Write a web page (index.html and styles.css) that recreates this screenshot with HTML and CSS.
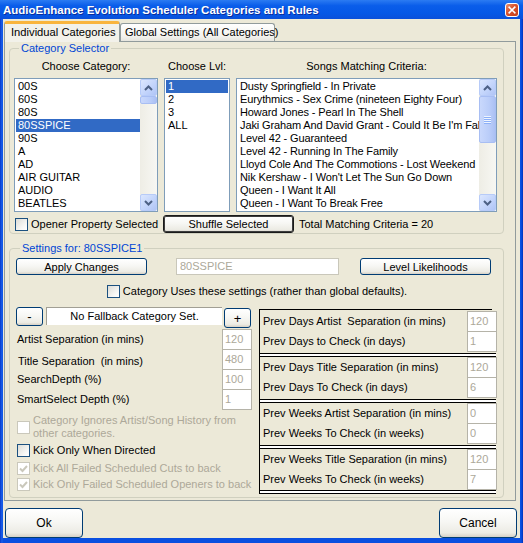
FILE: index.html
```html
<!DOCTYPE html>
<html>
<head>
<meta charset="utf-8">
<title>AudioEnhance Evolution Scheduler Categories and Rules</title>
<link rel="stylesheet" href="styles.css">
</head>
<body>
<div class="window">
  <div class="titlebar">
    <span class="title">AudioEnhance Evolution Scheduler Categories and Rules</span>
    <span class="close"><svg width="10" height="10" viewBox="0 0 10 10"><path d="M1.5 1.5 L8.5 8.5 M8.5 1.5 L1.5 8.5" stroke="#fff" stroke-width="2" stroke-linecap="square"/></svg></span>
  </div>
  <div class="client">
    <div class="tabs">
      <div class="tab active">Individual Categories</div>
      <div class="tab">Global Settings (All Categories)</div>
    </div>
    <div class="panel">
      <fieldset class="group selector">
        <legend>Category Selector</legend>
        <div class="lists">
          <div class="col col-cat">
            <div class="collabel">Choose Category:</div>
            <div class="listbox">
              <div class="items">
                <div class="item">00S</div>
                <div class="item">60S</div>
                <div class="item">80S</div>
                <div class="item sel">80SSPICE</div>
                <div class="item">90S</div>
                <div class="item">A</div>
                <div class="item">AD</div>
                <div class="item">AIR GUITAR</div>
                <div class="item">AUDIO</div>
                <div class="item">BEATLES</div>
              </div>
              <div class="vscroll">
                <div class="sbtn"><svg width="9" height="6" viewBox="0 0 9 6"><path d="M1 5 L4.5 1.5 L8 5" fill="none" stroke="#4D6185" stroke-width="2"/></svg></div>
                <div class="track"><div class="thumb small"></div></div>
                <div class="sbtn"><svg width="9" height="6" viewBox="0 0 9 6"><path d="M1 1 L4.5 4.5 L8 1" fill="none" stroke="#4D6185" stroke-width="2"/></svg></div>
              </div>
            </div>
          </div>
          <div class="col col-lvl">
            <div class="collabel">Choose Lvl:</div>
            <div class="listbox">
              <div class="items">
                <div class="item sel">1</div>
                <div class="item">2</div>
                <div class="item">3</div>
                <div class="item">ALL</div>
              </div>
            </div>
          </div>
          <div class="col col-songs">
            <div class="collabel">Songs Matching Criteria:</div>
            <div class="listbox">
              <div class="items songs">
                <div class="item">Dusty Springfield - In Private</div>
                <div class="item">Eurythmics - Sex Crime (nineteen Eighty Four)</div>
                <div class="item">Howard Jones - Pearl In The Shell</div>
                <div class="item">Jaki Graham And David Grant - Could It Be I'm Fall</div>
                <div class="item">Level 42 - Guaranteed</div>
                <div class="item">Level 42 - Running In The Family</div>
                <div class="item">Lloyd Cole And The Commotions - Lost Weekend</div>
                <div class="item">Nik Kershaw - I Won't Let The Sun Go Down</div>
                <div class="item">Queen - I Want It All</div>
                <div class="item">Queen - I Want To Break Free</div>
              </div>
              <div class="vscroll">
                <div class="sbtn"><svg width="9" height="6" viewBox="0 0 9 6"><path d="M1 5 L4.5 1.5 L8 5" fill="none" stroke="#4D6185" stroke-width="2"/></svg></div>
                <div class="track"><div class="thumb big"><span class="grip"></span></div></div>
                <div class="sbtn"><svg width="9" height="6" viewBox="0 0 9 6"><path d="M1 1 L4.5 4.5 L8 1" fill="none" stroke="#4D6185" stroke-width="2"/></svg></div>
              </div>
            </div>
          </div>
        </div>
        <div class="selrow">
          <label class="check opener"><span class="box"></span>Opener Property Selected</label>
          <button class="btn default shuffle">Shuffle Selected</button>
          <span class="total">Total Matching Criteria = 20</span>
        </div>
      </fieldset>

      <fieldset class="group settings">
        <legend>Settings for: 80SSPICE1</legend>
        <div class="toprow">
          <button class="btn wide">Apply Changes</button>
          <div class="tbox name">80SSPICE</div>
          <button class="btn wide">Level Likelihoods</button>
        </div>
        <div class="userow">
          <label class="check"><span class="box"></span>Category Uses these settings (rather than global defaults).</label>
        </div>
        <div class="lower">
          <div class="leftcol">
            <div class="fallback">
              <button class="btn tiny minus">-</button>
              <div class="fbox">No Fallback Category Set.</div>
              <button class="btn tiny plus">+</button>
            </div>
            <div class="fields">
              <div class="field"><span>Artist Separation (in mins)</span><div class="nbox">120</div></div>
              <div class="field"><span class="off1">Title Separation&nbsp; (in mins)</span><div class="nbox">480</div></div>
              <div class="field"><span>SearchDepth (%)</span><div class="nbox">100</div></div>
              <div class="field"><span>SmartSelect Depth (%)</span><div class="nbox">1</div></div>
            </div>
            <label class="check dis two"><span class="box"></span><span>Category Ignores Artist/Song History from<br>other categories.</span></label>
            <label class="check kick"><span class="box"></span>Kick Only When Directed</label>
            <label class="check dis k2"><span class="box on"><svg width="9" height="9" viewBox="0 0 9 9"><path d="M1 4.5 L3.5 7 L8 2" fill="none" stroke="#CAC8BB" stroke-width="2"/></svg></span>Kick All Failed Scheduled Cuts to back</label>
            <label class="check dis k3"><span class="box on"><svg width="9" height="9" viewBox="0 0 9 9"><path d="M1 4.5 L3.5 7 L8 2" fill="none" stroke="#CAC8BB" stroke-width="2"/></svg></span>Kick Only Failed Scheduled Openers to back</label>
          </div>
          <div class="rightcol">
            <div class="rgroup">
              <div class="rrow"><span>Prev Days Artist&nbsp; Separation (in mins)</span><div class="nbox">120</div></div>
              <div class="rrow"><span>Prev Days to Check (in days)</span><div class="nbox">1</div></div>
            </div>
            <div class="dline"></div>
            <div class="rgroup">
              <div class="rrow"><span>Prev Days Title Separation (in mins)</span><div class="nbox">120</div></div>
              <div class="rrow"><span>Prev Days To Check (in days)</span><div class="nbox">6</div></div>
            </div>
            <div class="dline"></div>
            <div class="rgroup">
              <div class="rrow"><span>Prev Weeks Artist Separation (in mins)</span><div class="nbox">0</div></div>
              <div class="rrow"><span>Prev Weeks To Check (in weeks)</span><div class="nbox">0</div></div>
            </div>
            <div class="dline"></div>
            <div class="rgroup">
              <div class="rrow"><span>Prev Weeks Title Separation (in mins)</span><div class="nbox">120</div></div>
              <div class="rrow"><span>Prev Weeks To Check (in weeks)</span><div class="nbox">7</div></div>
            </div>
            <div class="dline last"></div>
          </div>
        </div>
      </fieldset>
    </div>
    <div class="footer">
      <button class="btn big">Ok</button>
      <button class="btn big">Cancel</button>
    </div>
  </div>
</div>
</body>
</html>
```

FILE: styles.css
```css
* { box-sizing: border-box; }
html, body { margin: 0; padding: 0; }
body {
  width: 523px; height: 543px; overflow: hidden;
  font-family: "Liberation Sans", Arial, sans-serif;
  font-size: 11px; color: #000;
  background: #0A3FD0;
}
.window {
  width: 523px; height: 543px;
  display: flex; flex-direction: column;
  background: linear-gradient(90deg, #0838C8 0, #1A62EE 2px, #0A4FE0 3px, #0A4FE0 520px, #0950E6 521px, #0031B8 523px);
}
.titlebar {
  height: 19px; flex: none;
  display: flex; align-items: center; justify-content: space-between;
  padding: 0 4px 0 3px;
  background: linear-gradient(#2B7BF2, #0A5DEA 30%, #0558E6 70%, #0A50DA);
  color: #fff; font-weight: bold; font-size: 11.5px;
}
.title { text-shadow: 1px 1px 0 #0C2D9C; }
.close {
  width: 14px; height: 14px; margin-top: 1px;
  border: 1px solid #fff; border-radius: 3px;
  background: linear-gradient(135deg, #E98F6F, #D9512C 45%, #C33E1A);
  display: flex; align-items: center; justify-content: center;
}
.close svg { width: 8px; height: 8px; }
.client {
  flex: 1; display: flex; flex-direction: column;
  margin: 0 3px 5px 3px;
  background: #ECE9D8;
  padding-top: 2px;
}
.tabs { display: flex; align-items: flex-end; height: 20px; margin-left: 1px; position: relative; z-index: 1; }
.tab {
  height: 18px;
  border: 1px solid #919B9C; border-bottom: none;
  border-radius: 3px 3px 0 0;
  background: linear-gradient(#FFFFFF, #F3F3EF 70%, #E6E5DE);
  white-space: nowrap; font-size: 11.2px;
}
.tab.active {
  height: 21px; width: 116px; padding: 0 0 0 6px;
  line-height: 16px;
  background: #F2F1EA;
  border-top: 3px solid #F9B43C;
  margin-bottom: -1px;
}
.tabs .tab:not(.active) { width: 155px; padding: 0 0 0 4px; line-height: 17px; font-size: 11px; }
.panel {
  height: 460px; flex: none;
  margin: 0 4px 0 1px;
  border: 1px solid #919B9C;
  padding: 0 11px 0 4px;
}
.group {
  margin: 0; padding: 0;
  border: 1px solid #D0D0BF; border-radius: 4px;
  min-width: 0;
}
.group legend {
  color: #0046D5; padding: 0 2px; margin-left: 5px;
  line-height: 13px; height: 13px;
}
.selector { padding: 5px 5px 0 4px; height: 192px; }
.lists { display: flex; gap: 6px; }
.col { display: flex; flex-direction: column; }
.collabel { height: 13px; line-height: 13px; text-align: center; margin-bottom: 5px; }
.col-cat { width: 144px; }
.col-lvl { width: 66px; }
.col-songs { width: 261px; }
.listbox {
  height: 134px; background: #fff;
  border: 1px solid #7F9DB9;
  padding: 1px;
  display: flex; overflow: hidden;
}
.items { flex: 1; min-width: 0; overflow: hidden; }
.songs .item { letter-spacing: -0.12px; }
.item { height: 13px; line-height: 13px; padding-left: 2px; white-space: nowrap; overflow: hidden; }
.item.sel { background: #316AC5; color: #fff; }
.vscroll {
  width: 17px; flex: none; display: flex; flex-direction: column;
  background: linear-gradient(90deg, #EEEDE5, #F7F7F3);
  margin: -1px -1px -1px 0;
}
.sbtn {
  height: 17px; flex: none;
  border: 1px solid #B7CBF8; border-radius: 2px;
  background: linear-gradient(135deg, #DCE7FE, #C1D3FB 60%, #B0C4F5);
  display: flex; align-items: center; justify-content: center;
}
.track { flex: 1; }
.thumb {
  border: 1px solid #A8BEF3; border-radius: 2px;
  background: linear-gradient(90deg, #C9D8FC, #BACDF9 60%, #ABC0F3);
  display: flex; align-items: center; justify-content: center;
}
.thumb.small { height: 8px; }
.thumb.big { height: 47px; }
.grip {
  width: 7px; height: 8px;
  background: repeating-linear-gradient(#EEF4FE 0 1px, #8CB0F8 1px 2px);
}
.selrow { display: flex; align-items: center; height: 18px; margin-top: 3px; }
.check { display: flex; align-items: center; gap: 3px; white-space: nowrap; }
.box {
  width: 13px; height: 13px; flex: none;
  border: 1px solid #1C5180;
  background: linear-gradient(135deg, #DCDCD7, #F8F8F6 70%, #FFFFFF);
  display: flex; align-items: center; justify-content: center;
}
.opener { margin-left: 1px; width: 148px; }
.btn {
  font-family: "Liberation Sans", Arial, sans-serif; font-size: 11px; color: #000;
  border: 1px solid #003C74; border-radius: 3px;
  background: linear-gradient(#FFFFFF, #F7F7F4 45%, #ECEBE4 85%, #D6D0C5);
  padding: 0; margin: 0;
}
.shuffle { width: 131px; height: 18px; }
.btn.default { box-shadow: inset 0 0 0 1px #3C3C3C; border-color: #1A1A1A; }
.total { margin-left: 5px; }

.settings { margin-top: 8px; height: 256px; padding: 3px 5px 0 5px; }
.toprow { display: flex; align-items: center; height: 17px; margin-left: 1px; }
.btn.wide { width: 131px; height: 17px; }
.tbox {
  height: 17px; line-height: 15px; padding-left: 3px;
  border: 1px solid #C9C7BA; background: #fff; color: #ACA899;
}
.tbox.name { width: 163px; margin: 0 21px 0 29px; }
.userow { display: flex; justify-content: center; margin-top: 9px; height: 14px; padding-left: 1px; }
.lower { display: flex; margin-top: 9px; }
.leftcol { width: 236px; display: flex; flex-direction: column; margin-left: 1px; }
.fallback { display: flex; align-items: flex-start; height: 22px; }
.btn.tiny { width: 27px; height: 19px; font-size: 13px; line-height: 15px; }
.fbox {
  width: 176px; height: 18px; margin: 0 2px 0 3px;
  background: #fff; border-top: 1px solid #A19F94; border-left: 1px solid #A19F94;
  text-align: center; line-height: 16px;
}
.plus { margin-top: 1px; height: 20px !important; }
.fields { display: flex; flex-direction: column; }
.field { display: flex; justify-content: space-between; align-items: flex-start; height: 20px; }
.field:last-child { height: 21px; }
.field span { padding-left: 1px; line-height: 20px; }
.field .off1 { padding-left: 2px; padding-top: 2px; }
.nbox {
  width: 30px; height: 21px; flex: none;
  border: 1px solid #B5B3A8; background: #fff; color: #ACA899;
  padding-left: 2px; line-height: 19px;
}
.check.two { margin-top: 4px; height: 26px; margin-left: 1px; }
.check.two > span:last-child { line-height: 13px; }
.dis { color: #ACA899; }
.dis .box { border-color: #CAC8BB; background: #fff; }
.kick { margin-top: 3px; height: 14px; margin-left: 1px; }
.k2 { margin-top: 4px; height: 14px; margin-left: 1px; }
.k3 { margin-top: 2px; height: 14px; margin-left: 1px; }

.rightcol {
  width: 238px; margin-left: 7px; margin-top: 2px;
  border-left: 1px solid #000;
  display: flex; flex-direction: column;
  background: linear-gradient(#000, #000) 0 0 / 232px 1px no-repeat;
  padding-top: 2px;
}
.rgroup { display: flex; flex-direction: column; }
.rrow { display: flex; justify-content: space-between; align-items: flex-start; height: 20px; padding-left: 3px; }
.rrow:last-child { height: 21px; }
.rrow span { line-height: 20px; }
.dline {
  height: 4px; margin: 1px 1px 0 0;
  border-top: 1px solid #000; border-bottom: 1px solid #000; background: #fff;
}
.dline.last { margin-top: 0; }

.footer { display: flex; justify-content: space-between; margin-top: auto; padding: 0 3px 0 2px; }
.btn.big { width: 78px; height: 30px; font-size: 12px; border-radius: 4px; }
```
